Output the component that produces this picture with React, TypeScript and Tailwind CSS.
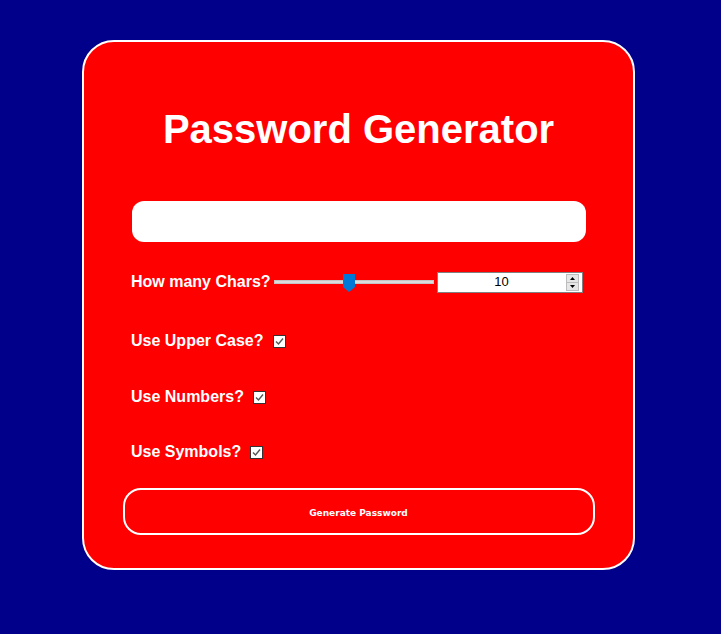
import React from 'react';

function Check() {
  return (
    <span className="inline-flex w-[13px] h-[13px] border border-[#333] bg-white items-center justify-center">
      <svg width="11" height="11" viewBox="0 0 11 11">
        <path d="M2 5.5 L4.5 8 L9 2.5" fill="none" stroke="#555" strokeWidth="1.4" />
      </svg>
    </span>
  );
}

function Slider() {
  return (
    <div className="relative w-[160px] h-[22px] flex items-center">
      <div className="w-full h-[4px] bg-[#dcdcdc] border border-[#c4c4c4]" />
      {/* thumb */}
      <svg className="absolute left-[69px] top-[3px]" width="12" height="18" viewBox="0 0 12 18">
        <path d="M0 0 H12 V13 L6 18 L0 13 Z" fill="#0078d7" />
      </svg>
    </div>
  );
}

function NumberBox() {
  return (
    <div className="ml-[3px] w-[146px] h-[21px] border border-[#808080] bg-white flex items-center font-normal">
      <span className="flex-1 text-center text-[13px] text-black">10</span>
      <div className="w-[13px] h-[17px] mr-[3px] flex flex-col bg-[#e6e6e6] border border-[#bdbdbd]">
        <div className="flex-1 flex items-center justify-center border-b border-[#bdbdbd]">
          <svg width="5" height="3" viewBox="0 0 5 3"><path d="M0 3 L2.5 0 L5 3 Z" fill="#000" /></svg>
        </div>
        <div className="flex-1 flex items-center justify-center">
          <svg width="5" height="3" viewBox="0 0 5 3"><path d="M0 0 L2.5 3 L5 0 Z" fill="#000" /></svg>
        </div>
      </div>
    </div>
  );
}

export default function App() {
  return (
    <div
      className="min-h-[634px] bg-[#00008b] pt-[40px]"
      style={{ fontFamily: '"Liberation Sans", Arial, sans-serif' }}
    >
      <div className="w-[553px] h-[530px] ml-[82px] bg-[#ff0000] border-2 border-white rounded-[32px]">
        <h1 className="mt-[63px] text-center text-white font-bold text-[40px] leading-[48px]">
          Password Generator
        </h1>

        <div className="mt-[48px] w-[454px] h-[41px] mx-auto bg-white rounded-[12px]" />

        <div className="px-[47px] text-white font-bold text-[16px]">
          <div className="mt-[29px] h-[22px] flex items-center">
            <span>How many Chars?</span>
            <div className="ml-[3px]">
              <Slider />
            </div>
            <NumberBox />
          </div>

          <div className="mt-[38px] h-[20px] flex items-center gap-[9px]">
            <span>Use Upper Case?</span>
            <Check />
          </div>

          <div className="mt-[36px] h-[20px] flex items-center gap-[9px]">
            <span>Use Numbers?</span>
            <Check />
          </div>

          <div className="mt-[35px] h-[20px] flex items-center gap-[9px]">
            <span>Use Symbols?</span>
            <Check />
          </div>
        </div>

        <button
          className="mt-[26px] w-[472px] h-[47px] mx-auto flex items-center justify-center pt-[4px] border-2 border-white rounded-[18px] text-white font-bold text-[9px]"
          style={{ fontFamily: '"DejaVu Sans", Verdana, sans-serif' }}
        >
          Generate Password
        </button>
      </div>
    </div>
  );
}
